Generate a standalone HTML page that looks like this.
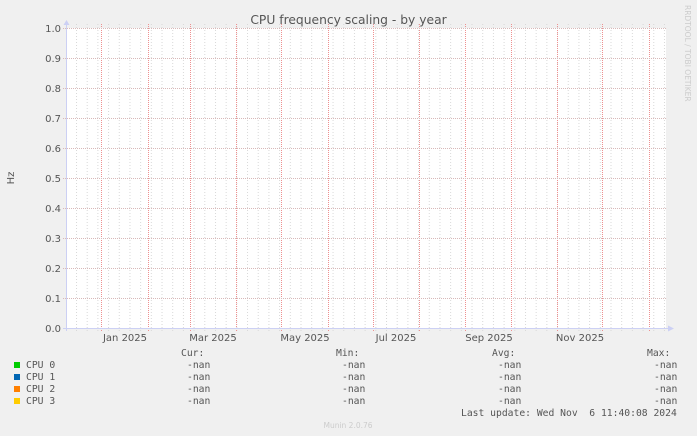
<!DOCTYPE html>
<html><head><meta charset="utf-8"><style>
html,body{margin:0;padding:0;background:#f0f0f0;}
svg{display:block}
.m{font-family:"DejaVu Sans Mono","Liberation Mono",monospace;font-size:9.7px;fill:#555}
.s{font-family:"DejaVu Sans","Liberation Sans",sans-serif;}
</style></head><body>
<svg width="697" height="436" viewBox="0 0 697 436" xmlns="http://www.w3.org/2000/svg">
<defs>
<pattern id="wk" x="76" y="0" width="10.69" height="436" patternUnits="userSpaceOnUse">
<line x1="0.5" y1="0" x2="0.5" y2="436" stroke="#d8d8d8" stroke-width="1" stroke-dasharray="1,2"/>
</pattern>
</defs>
<rect width="697" height="436" fill="#f0f0f0"/>
<rect x="67" y="28" width="599" height="300" fill="#fff"/>
<rect x="70" y="24" width="596" height="307" fill="url(#wk)"/>
<g stroke="#ee9090" stroke-width="1" stroke-dasharray="1,1">
<line x1="101.5" y1="24" x2="101.5" y2="331"/>
<line x1="148.5" y1="24" x2="148.5" y2="331"/>
<line x1="190.5" y1="24" x2="190.5" y2="331"/>
<line x1="236.5" y1="24" x2="236.5" y2="331"/>
<line x1="281.5" y1="24" x2="281.5" y2="331"/>
<line x1="328.5" y1="24" x2="328.5" y2="331"/>
<line x1="373.5" y1="24" x2="373.5" y2="331"/>
<line x1="419.5" y1="24" x2="419.5" y2="331"/>
<line x1="465.5" y1="24" x2="465.5" y2="331"/>
<line x1="511.5" y1="24" x2="511.5" y2="331"/>
<line x1="557.5" y1="24" x2="557.5" y2="331"/>
<line x1="602.5" y1="24" x2="602.5" y2="331"/>
<line x1="649.5" y1="24" x2="649.5" y2="331"/>
</g>
<g stroke="#d8b8b8" stroke-width="1" stroke-dasharray="1,1">
<line x1="63" y1="28.5" x2="667" y2="28.5"/>
<line x1="63" y1="58.5" x2="667" y2="58.5"/>
<line x1="63" y1="88.5" x2="667" y2="88.5"/>
<line x1="63" y1="118.5" x2="667" y2="118.5"/>
<line x1="63" y1="148.5" x2="667" y2="148.5"/>
<line x1="63" y1="178.5" x2="667" y2="178.5"/>
<line x1="63" y1="208.5" x2="667" y2="208.5"/>
<line x1="63" y1="238.5" x2="667" y2="238.5"/>
<line x1="63" y1="268.5" x2="667" y2="268.5"/>
<line x1="63" y1="298.5" x2="667" y2="298.5"/>
</g>
<line x1="66.5" y1="24" x2="66.5" y2="331" stroke="#ccd0f4"/>
<line x1="63" y1="328.5" x2="670" y2="328.5" stroke="#ccd0f4"/>
<polygon points="63.5,25 66.5,20 69.5,25" fill="#ccd0f4"/>
<polygon points="668,325.5 674,328.5 668,331.5" fill="#ccd0f4"/>
<g class="s" font-size="10" fill="#555" text-anchor="end">
<text x="61" y="32">1.0</text><text x="61" y="62">0.9</text><text x="61" y="92">0.8</text>
<text x="61" y="122">0.7</text><text x="61" y="152">0.6</text><text x="61" y="182">0.5</text>
<text x="61" y="212">0.4</text><text x="61" y="242">0.3</text><text x="61" y="272">0.2</text>
<text x="61" y="302">0.1</text><text x="61" y="332">0.0</text>
</g>
<g class="s" font-size="10" fill="#555" text-anchor="middle">
<text x="125" y="341">Jan 2025</text><text x="213" y="341">Mar 2025</text>
<text x="305" y="341">May 2025</text><text x="396" y="341">Jul 2025</text>
<text x="489" y="341">Sep 2025</text><text x="580" y="341">Nov 2025</text>
</g>
<text class="s" font-size="10" fill="#555" transform="translate(14,178) rotate(-90)" text-anchor="middle">Hz</text>
<text class="s" font-size="12.3" fill="#555" x="348.5" y="24" text-anchor="middle">CPU frequency scaling - by year</text>
<text class="s" font-size="7.5" fill="#ccc" transform="translate(685,5) rotate(90)">RRDTOOL / TOBI OETIKER</text>
<rect x="14" y="362" width="6" height="6" fill="#00cc00"/>
<rect x="14" y="374" width="6" height="6" fill="#0066b3"/>
<rect x="14" y="386" width="6" height="6" fill="#ff8000"/>
<rect x="14" y="398" width="6" height="6" fill="#ffcc00"/>
<g class="m">
<text x="26" y="368">CPU 0</text><text x="26" y="380">CPU 1</text>
<text x="26" y="392">CPU 2</text><text x="26" y="404">CPU 3</text>
<text x="181" y="356">Cur:</text><text x="336" y="356">Min:</text>
<text x="492" y="356">Avg:</text><text x="647" y="356">Max:</text>
<text x="187" y="368">-nan</text><text x="187" y="380">-nan</text><text x="187" y="392">-nan</text><text x="187" y="404">-nan</text>
<text x="342" y="368">-nan</text><text x="342" y="380">-nan</text><text x="342" y="392">-nan</text><text x="342" y="404">-nan</text>
<text x="498" y="368">-nan</text><text x="498" y="380">-nan</text><text x="498" y="392">-nan</text><text x="498" y="404">-nan</text>
<text x="654" y="368">-nan</text><text x="654" y="380">-nan</text><text x="654" y="392">-nan</text><text x="654" y="404">-nan</text>
<text x="461" y="416" xml:space="preserve">Last update: Wed Nov  6 11:40:08 2024</text>
</g>
<text class="s" font-size="7.5" fill="#ccc" x="348" y="428" text-anchor="middle">Munin 2.0.76</text>
</svg>
</body></html>
